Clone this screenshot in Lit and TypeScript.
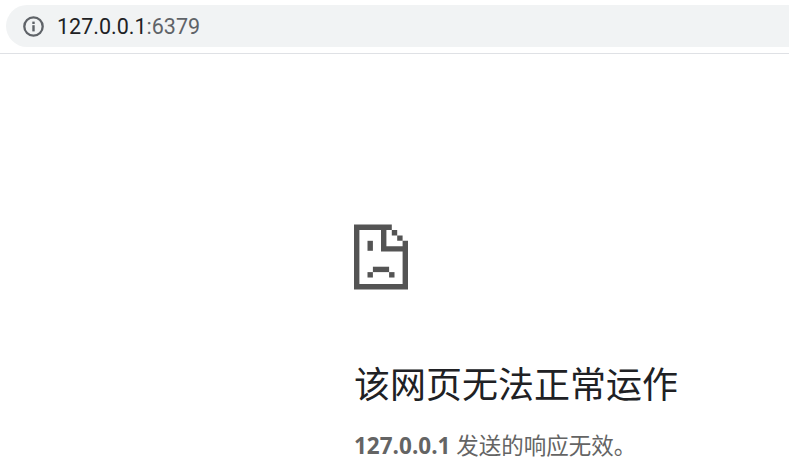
import { LitElement, css, html } from "lit";
import { customElement } from "lit/decorators.js";

@customElement("app-root")
export class AppRoot extends LitElement {
  static styles = css`
    :host {
      display: block;
      width: 789px;
      height: 470px;
      overflow: hidden;
      background: #fff;
      font-family: "Open Sans", "Noto Sans CJK SC", sans-serif;
    }
    .toolbar {
      height: 54px;
      box-sizing: border-box;
      padding: 5px 0 6px 6px;
      border-bottom: 1px solid #dfe1e5;
      overflow: hidden;
    }
    .omnibox {
      width: 820px;
      height: 42px;
      border-radius: 21px;
      background: #f1f3f4;
      display: flex;
      align-items: center;
      gap: 13px;
      padding-left: 17px;
      box-sizing: border-box;
    }
    .info {
      width: 21px;
      height: 21px;
      flex: none;
    }
    .url {
      font-family: Roboto, sans-serif;
      font-size: 21.5px;
      color: #202124;
    }
    .url span {
      color: #5f6368;
    }
    .main {
      padding: 170px 0 0 354px;
    }
    .sad {
      display: block;
      width: 54px;
      height: 66px;
      fill: #545454;
    }
    h1 {
      margin: 71px 0 0;
      font-size: 36px;
      font-weight: 400;
      line-height: 48px;
      color: #202124;
    }
    p {
      margin: 22px 0 0;
      font-size: 22.5px;
      line-height: 30px;
      color: #646464;
    }
    strong {
      font-weight: 700;
    }
  `;

  render() {
    return html`
      <div class="toolbar">
        <div class="omnibox">
          <svg class="info" viewBox="0 0 21 21">
            <circle cx="10.5" cy="10.5" r="9.2" fill="none" stroke="#5f6368" stroke-width="2.3"></circle>
            <rect x="9.3" y="9.2" width="2.4" height="6.2" fill="#5f6368"></rect>
            <rect x="9.3" y="5.6" width="2.4" height="2.4" fill="#5f6368"></rect>
          </svg>
          <div class="url">127.0.0.1<span>:6379</span></div>
        </div>
      </div>
      <div class="main">
        <svg class="sad" viewBox="0 0 10 12">
          <path
            fill-rule="evenodd"
            d="M0 0H7V1H8V2H9V3H10V12H0ZM1 1V11H9V5H5V1ZM6 1V4H9V3H8V2H7V1Z"
          ></path>
          <rect x="2.5" y="3" width="1" height="1.85"></rect>
          <rect x="3.5" y="7.8" width="3" height="1"></rect>
          <rect x="2.5" y="8.8" width="1" height="1"></rect>
          <rect x="6.5" y="8.8" width="1" height="1"></rect>
        </svg>
        <h1>该网页无法正常运作</h1>
        <p><strong>127.0.0.1</strong> 发送的响应无效。</p>
      </div>
    `;
  }
}
